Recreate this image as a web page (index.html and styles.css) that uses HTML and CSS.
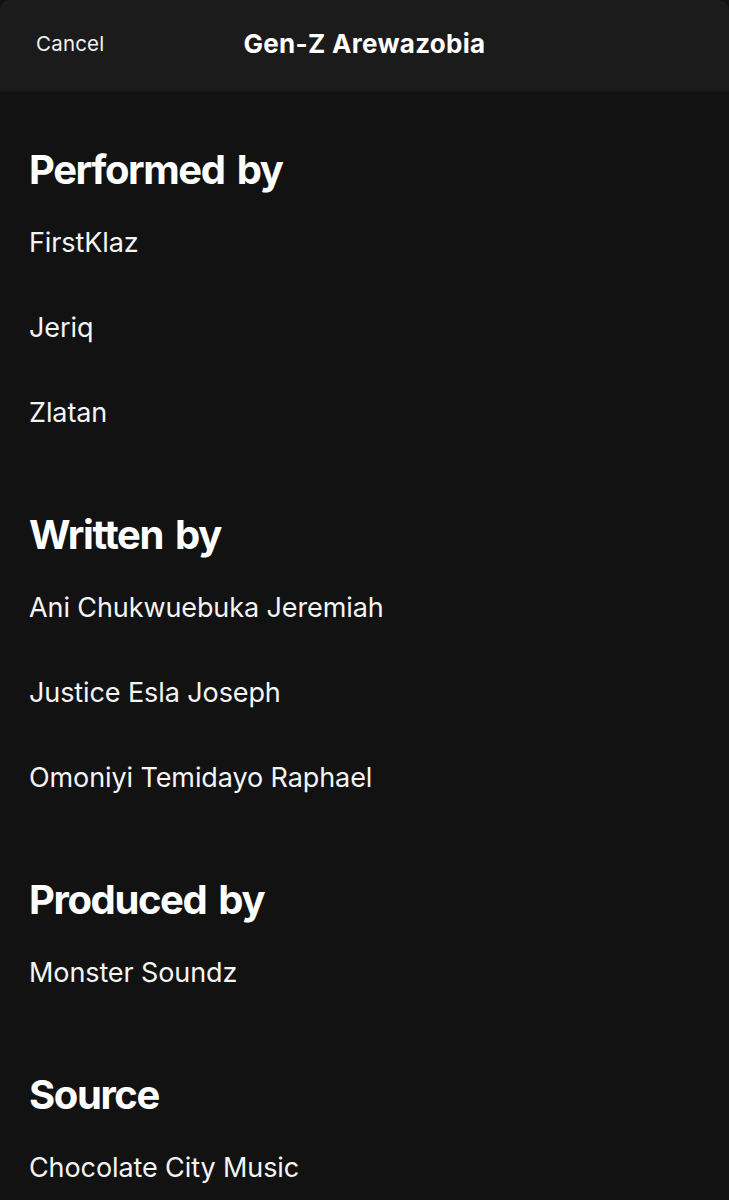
FILE: index.html
```html
<!DOCTYPE html>
<html>
<head>
<meta charset="utf-8">
<link rel="stylesheet" href="styles.css">
</head>
<body>
<header class="topbar">
  <div class="cancel">Cancel</div>
  <div class="title">Gen-Z Arewazobia</div>
  <div class="spacer"></div>
</header>
<main class="content">
  <section class="group">
    <h2 class="heading">Performed by</h2>
    <ul class="list">
      <li class="item">FirstKlaz</li>
      <li class="item">Jeriq</li>
      <li class="item">Zlatan</li>
    </ul>
  </section>
  <section class="group">
    <h2 class="heading">Written by</h2>
    <ul class="list">
      <li class="item">Ani Chukwuebuka Jeremiah</li>
      <li class="item">Justice Esla Joseph</li>
      <li class="item">Omoniyi Temidayo Raphael</li>
    </ul>
  </section>
  <section class="group">
    <h2 class="heading">Produced by</h2>
    <ul class="list">
      <li class="item">Monster Soundz</li>
    </ul>
  </section>
  <section class="group">
    <h2 class="heading">Source</h2>
    <ul class="list">
      <li class="item">Chocolate City Music</li>
    </ul>
  </section>
</main>
</body>
</html>
```
FILE: styles.css
```css
html, body {
  margin: 0;
  padding: 0;
  background: #121212;
  color: #ffffff;
  font-family: Inter, "Noto Sans", "Liberation Sans", sans-serif;
}
.topbar {
  height: 91px;
  background: #1b1b1b;
  border-radius: 10px 10px 0 0;
  display: grid;
  grid-template-columns: 1fr auto 1fr;
  align-items: center;
  padding: 0 36px 4px 36px;
  box-sizing: border-box;
}
.cancel {
  font-size: 20.5px;
  color: #f2f2f2;
  letter-spacing: 0.2px;
}
.title {
  font-size: 26px;
  font-weight: 700;
  letter-spacing: 0.3px;
}
.content {
  padding: 54px 29px 0 29px;
}
.group {
  margin: 0 0 55px 0;
}
.heading {
  margin: 0 0 5px 0;
  font-size: 40px;
  line-height: 50px;
  font-weight: 700;
  letter-spacing: -1.4px;
  word-spacing: 4px;
}
.list {
  list-style: none;
  margin: 0;
  padding: 0;
}
.item {
  height: 85px;
  line-height: 85px;
  font-size: 27px;
  color: #f4f4f4;
  letter-spacing: -0.1px;
}
```
